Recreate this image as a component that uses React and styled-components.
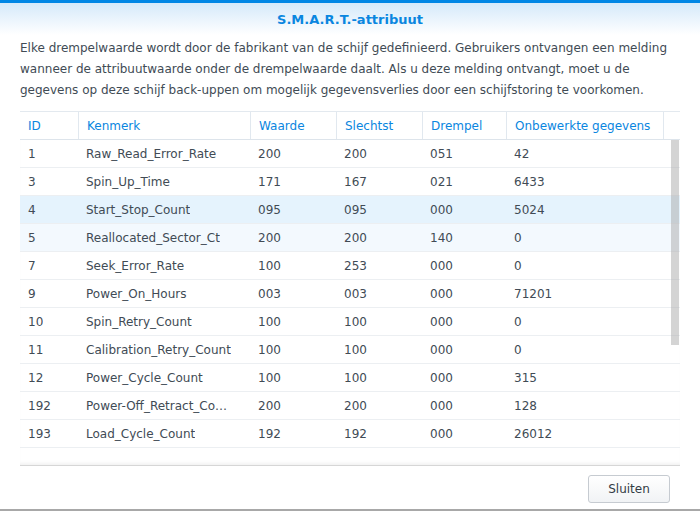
import React from 'react'
import styled, { createGlobalStyle } from 'styled-components'

const rows = [
  ['1', 'Raw_Read_Error_Rate', '200', '200', '051', '42'],
  ['3', 'Spin_Up_Time', '171', '167', '021', '6433'],
  ['4', 'Start_Stop_Count', '095', '095', '000', '5024'],
  ['5', 'Reallocated_Sector_Ct', '200', '200', '140', '0'],
  ['7', 'Seek_Error_Rate', '100', '253', '000', '0'],
  ['9', 'Power_On_Hours', '003', '003', '000', '71201'],
  ['10', 'Spin_Retry_Count', '100', '100', '000', '0'],
  ['11', 'Calibration_Retry_Count', '100', '100', '000', '0'],
  ['12', 'Power_Cycle_Count', '100', '100', '000', '315'],
  ['192', 'Power-Off_Retract_Count', '200', '200', '000', '128'],
  ['193', 'Load_Cycle_Count', '192', '192', '000', '26012'],
]

const columns = ['ID', 'Kenmerk', 'Waarde', 'Slechtst', 'Drempel', 'Onbewerkte gegevens']

const GlobalStyle = createGlobalStyle`
  html, body {
    margin: 0;
    padding: 0;
    background: #fff;
    font-family: "DejaVu Sans", Verdana, sans-serif;
  }
`

const Window = styled.div`
  width: 700px;
  height: 511px;
  box-sizing: border-box;
  border-top: 3px solid #0086e5;
  border-bottom: 2px solid #a8a8a8;
  display: flex;
  flex-direction: column;
  background: #fff;
`

const Header = styled.div`
  height: 32px;
  display: flex;
  align-items: center;
  justify-content: center;
  background: linear-gradient(to bottom, #d5e9fa 0%, #ffffff 100%);
`

const Title = styled.h1`
  margin: 0;
  font-size: 13px;
  font-weight: bold;
  color: #0a86e0;
`

const Intro = styled.p`
  margin: 3px 20px 0;
  font-size: 12px;
  line-height: 21px;
  color: #414b55;
`

const Grid = styled.div`
  margin: 10px 20px 0;
  width: 660px;
`

const cols = '58px 172px 86px 86px 84px 157px 17px'

const HeadRow = styled.div`
  display: grid;
  grid-template-columns: ${cols};
  height: 27px;
  border-top: 1px solid #e3e9ef;
  border-bottom: 1px solid #dde4eb;
`

const HeadCell = styled.div`
  display: flex;
  align-items: center;
  padding-left: 8px;
  font-size: 12px;
  color: #0a86e0;
  border-left: ${p => (p.$first ? 'none' : '1px solid #e1e8ef')};
`

const Body = styled.div`
  position: relative;
  height: 325px;
  border-bottom: 1px solid #d6d6d6;
  box-shadow: inset 0 -4px 4px -3px #ececec;
`

const Row = styled.div`
  display: grid;
  grid-template-columns: ${cols};
  height: 27px;
  border-bottom: 1px solid #eceff2;
  background: ${p => (p.$selected ? '#e5f3fd' : p.$hover ? '#f3f9fe' : 'transparent')};
`

const Cell = styled.div`
  display: flex;
  align-items: center;
  padding-left: 8px;
  padding-right: 17px;
  font-size: 12px;
  color: #414b55;
  white-space: nowrap;
  overflow: hidden;

  span {
    overflow: hidden;
    text-overflow: ellipsis;
  }
`

const Thumb = styled.div`
  position: absolute;
  top: 0;
  right: 1px;
  width: 8px;
  height: 205px;
  background: rgba(170, 170, 170, 0.5);
`

const Footer = styled.div`
  flex: 1;
  display: flex;
  justify-content: flex-end;
  align-items: flex-start;
  padding: 9px 30px 0 0;
`

const Button = styled.button`
  width: 82px;
  height: 28px;
  border: 1px solid #c6cbd1;
  border-radius: 3px;
  background: linear-gradient(to bottom, #ffffff, #f1f3f5);
  font-family: inherit;
  font-size: 12px;
  color: #333c45;
`

export default function App() {
  return (
    <>
      <GlobalStyle />
      <Window>
        <Header>
          <Title>S.M.A.R.T.-attribuut</Title>
        </Header>
        <Intro>
          Elke drempelwaarde wordt door de fabrikant van de schijf gedefinieerd. Gebruikers ontvangen een melding
          wanneer de attribuutwaarde onder de drempelwaarde daalt. Als u deze melding ontvangt, moet u de
          gegevens op deze schijf back-uppen om mogelijk gegevensverlies door een schijfstoring te voorkomen.
        </Intro>
        <Grid>
          <HeadRow>
            {columns.map((c, i) => (
              <HeadCell key={c} $first={i === 0}>{c}</HeadCell>
            ))}
            <HeadCell />
          </HeadRow>
          <Body>
            {rows.map((r, i) => (
              <Row key={r[0]} $selected={i === 2} $hover={i === 3}>
                {r.map((v, j) => (
                  <Cell key={j}><span>{v}</span></Cell>
                ))}
                <Cell />
              </Row>
            ))}
            <Thumb />
          </Body>
        </Grid>
        <Footer>
          <Button>Sluiten</Button>
        </Footer>
      </Window>
    </>
  )
}
